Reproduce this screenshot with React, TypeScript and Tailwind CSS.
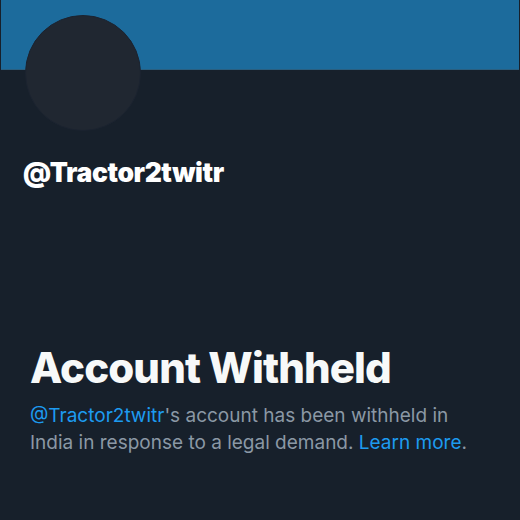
import React from 'react';

const App: React.FC = () => {
  return (
    <div
      className="w-[520px] h-[520px] bg-[#17202b] overflow-hidden flex flex-col"
      style={{ fontFamily: 'Inter, "Noto Sans", sans-serif' }}
    >
      {/* Banner */}
      <div className="mx-[1px] h-[70px] bg-[#1c6b9c] border-b border-[#2a5f80] shrink-0" />

      {/* Avatar + handle */}
      <div className="px-[23px]">
        <div className="-mt-[55px] ml-[2px] w-[116px] h-[116px] rounded-full bg-[#202731] border border-[#1b2330]" />
        <div className="mt-[25px] text-white text-[26.5px] font-black tracking-[-0.4px] leading-[32px]">
          @Tractor2twitr
        </div>
      </div>

      {/* Withheld notice */}
      <div className="mt-auto mb-[64px] px-[30px]">
        <h1 className="text-[#f7f9f9] text-[42px] font-extrabold leading-[48px] tracking-[-0.9px]">
          Account Withheld
        </h1>
        <p className="mt-[10px] text-[#8b98a5] text-[19px] leading-[27px]">
          <span className="text-[#1d9bf0]">@Tractor2twitr</span>'s account has been withheld in
          India in response to a legal demand.{' '}
          <span className="text-[#1d9bf0]">Learn more</span>.
        </p>
      </div>
    </div>
  );
};

export default App;
